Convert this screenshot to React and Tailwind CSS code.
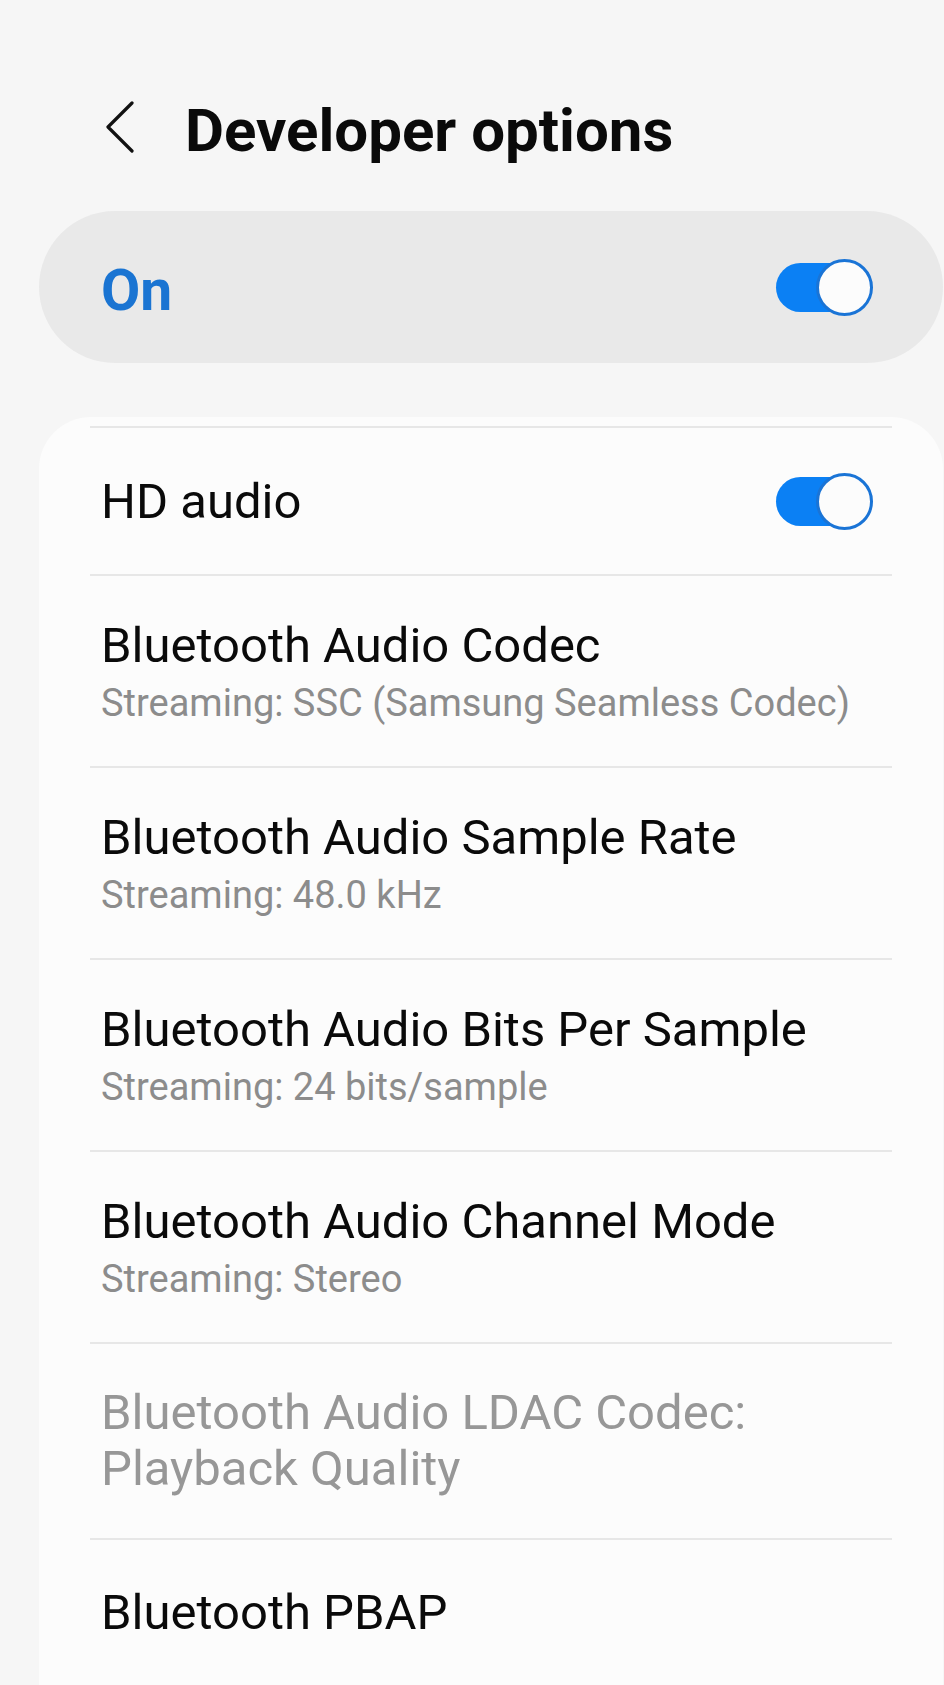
import React from "react";

function Toggle() {
  return (
    <div className="relative w-[97px] h-[57px] shrink-0">
      <div className="absolute left-0 top-[4px] w-[84px] h-[49px] rounded-full bg-[#0b80f4]" />
      <div className="absolute right-0 top-0 w-[57px] h-[57px] rounded-full bg-[#fcfcfc] border-[3px] border-[#1a74d6]" />
    </div>
  );
}

function SimpleRow({ title, toggle, muted }) {
  return (
    <div className="border-t-2 border-[#e7e7e7] pt-[45px] pb-[44px] pl-[11px] pr-[19px] flex items-center justify-between">
      <div className={`text-[49px] leading-[56px] ${muted ? "text-[#979797]" : "text-[#0a0a0a]"}`}>{title}</div>
      {toggle && <Toggle />}
    </div>
  );
}

function SubRow({ title, sub }) {
  return (
    <div className="border-t-2 border-[#e7e7e7] pt-[42px] pb-[38px] pl-[11px] pr-[19px]">
      <div className="text-[49px] leading-[56px] text-[#0a0a0a]">{title}</div>
      <div className="mt-[4px] text-[38px] leading-[50px] text-[#8c8c8c]">{sub}</div>
    </div>
  );
}

export default function App() {
  return (
    <div
      className="w-[944px] h-[1685px] overflow-hidden bg-[#f6f6f6]"
      style={{ fontFamily: "Roboto, 'Noto Sans', sans-serif" }}
    >
      <div className="flex items-start pt-[96px] pl-[105px]">
        <svg width="30" height="52" viewBox="0 0 30 52" className="mt-[5px]" fill="none">
          <path d="M27 2 L3 26 L27 50" stroke="#111" strokeWidth="3.2" strokeLinecap="round" strokeLinejoin="round" />
        </svg>
        <div className="ml-[50px] text-[60px] leading-[70px] font-bold text-[#0a0a0a]">
          Developer options
        </div>
      </div>

      <div className="mt-[45px] ml-[39px] mr-[1px] h-[152px] rounded-full bg-[#e9e9e9] flex items-center justify-between pl-[62px] pr-[70px]">
        <div className="mt-[8px] text-[57px] leading-[66px] font-bold text-[#1a74d2]">On</div>
        <Toggle />
      </div>

      <div className="mt-[54px] ml-[39px] mr-[1px] rounded-t-[52px] bg-[#fcfcfc] pt-[9px] px-[51px] min-h-[1300px]">
        <SimpleRow title="HD audio" toggle />
        <SubRow title="Bluetooth Audio Codec" sub="Streaming: SSC (Samsung Seamless Codec)" />
        <SubRow title="Bluetooth Audio Sample Rate" sub="Streaming: 48.0 kHz" />
        <SubRow title="Bluetooth Audio Bits Per Sample" sub="Streaming: 24 bits/sample" />
        <SubRow title="Bluetooth Audio Channel Mode" sub="Streaming: Stereo" />
        <div className="border-t-2 border-[#e7e7e7] pt-[41px] pb-[41px] pl-[11px] pr-[19px]">
          <div className="text-[49px] leading-[56px] text-[#979797]">
            Bluetooth Audio LDAC Codec:
            <br />
            Playback Quality
          </div>
        </div>
        <SimpleRow title="Bluetooth PBAP" />
        <div className="border-t-2 border-[#e7e7e7] h-[40px]" />
      </div>
    </div>
  );
}
